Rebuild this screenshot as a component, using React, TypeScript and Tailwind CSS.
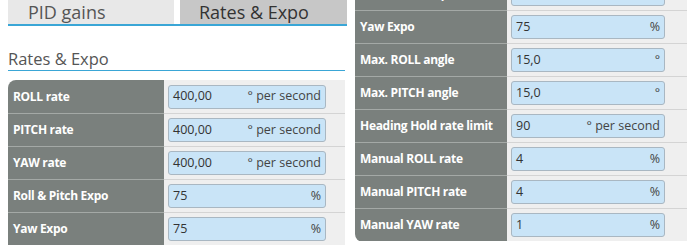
import React from "react";

type Row = { label: string; value: string; unit: string };

const leftRows: Row[] = [
  { label: "ROLL rate", value: "400,00", unit: "° per second" },
  { label: "PITCH rate", value: "400,00", unit: "° per second" },
  { label: "YAW rate", value: "400,00", unit: "° per second" },
  { label: "Roll & Pitch Expo", value: "75", unit: "%" },
  { label: "Yaw Expo", value: "75", unit: "%" },
];

const rightRows: Row[] = [
  { label: "Roll & Pitch Expo", value: "75", unit: "%" },
  { label: "Yaw Expo", value: "75", unit: "%" },
  { label: "Max. ROLL angle", value: "15,0", unit: "°" },
  { label: "Max. PITCH angle", value: "15,0", unit: "°" },
  { label: "Heading Hold rate limit", value: "90", unit: "° per second" },
  { label: "Manual ROLL rate", value: "4", unit: "%" },
  { label: "Manual PITCH rate", value: "4", unit: "%" },
  { label: "Manual YAW rate", value: "1", unit: "%" },
];

function SettingRow({ row, first, labelW, inputW }: { row: Row; first: boolean; labelW: string; inputW: string }) {
  return (
    <div className="flex h-[33px]">
      <div
        className={`${labelW} shrink-0 bg-[#7a807d] flex items-center pl-[5px] text-white font-bold text-[12px] tracking-[-0.3px] ${
          first ? "" : "border-t border-[#a4a9a6]"
        }`}
      >
        {row.label}
      </div>
      <div
        className={`flex-1 bg-[#efefef] flex items-center pl-[4px] ${
          first ? "" : "border-t border-[#d4d4d4]"
        }`}
      >
        <div
          className={`${inputW} h-[24px] bg-[#c9e4f7] border border-[#a9b7c2] rounded-[3px] flex items-center justify-between px-[4px] text-[12.5px] text-[#333]`}
        >
          <span>{row.value}</span>
          <span className="text-[#444]">{row.unit}</span>
        </div>
      </div>
    </div>
  );
}

export default function App() {
  return (
    <div
      className="w-[687px] h-[245px] overflow-hidden bg-white flex"
      style={{ fontFamily: '"Open Sans", sans-serif' }}
    >
      <div className="w-[347px] shrink-0 pl-[8px] flex flex-col">
        <div className="flex h-[26px] border-b-2 border-[#3aa6d6]">
          <div className="w-[166px] bg-[#e8e8e8] text-[18px] text-[#555] pl-[20px] leading-[24px]">
            PID gains
          </div>
          <div className="w-[6px]" />
          <div className="flex-1 bg-[#c7c7c7] text-[18px] text-[#333] pl-[19px] leading-[24px]">
            Rates &amp; Expo
          </div>
        </div>
        <div className="mt-[23px] h-[22px] border-b border-[#3aa6d6] text-[16.5px] text-[#555] leading-[20px] mr-[2px]">
          Rates &amp; Expo
        </div>
        <div className="mt-[9px] rounded-tl-[8px] overflow-hidden mr-[2px]">
          {leftRows.map((r, i) => (
            <SettingRow key={i} row={r} first={i === 0} labelW="w-[156px]" inputW="w-[158px]" />
          ))}
        </div>
      </div>
      <div className="ml-[8px] flex-1 mt-[-23px] h-[265px] rounded-bl-[8px] overflow-hidden self-start">
        {rightRows.map((r, i) => (
          <SettingRow key={i} row={r} first={i === 0} labelW="w-[152px]" inputW="w-[154px]" />
        ))}
      </div>
    </div>
  );
}
